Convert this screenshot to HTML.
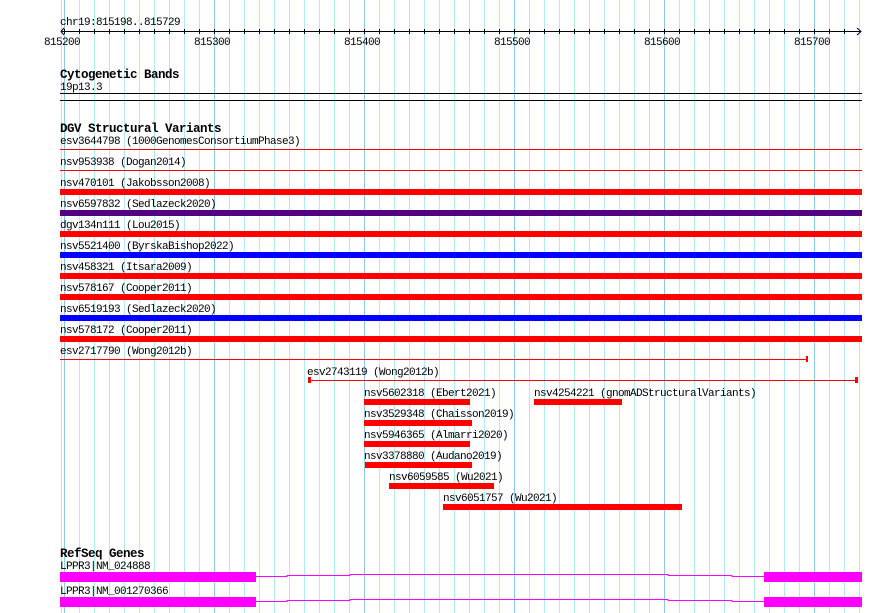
<!DOCTYPE html>
<html><head><meta charset="utf-8"><style>
html,body{margin:0;padding:0;background:#fff;width:890px;height:613px;overflow:hidden}
svg{display:block}
text{font-family:"Liberation Mono",monospace;font-size:11px;letter-spacing:-0.6px;fill:#000}
.h{font-weight:bold;font-size:12.5px;letter-spacing:-0.5px}
</style></head><body>
<svg width="890" height="613" xmlns="http://www.w3.org/2000/svg">
<defs>
<pattern id="gp" x="64" y="0" width="15" height="613" patternUnits="userSpaceOnUse"><rect x="0" y="0" width="1" height="613" fill="#b0eaf2"/></pattern>
<pattern id="tp" x="64" y="29" width="15" height="5" patternUnits="userSpaceOnUse"><rect x="0" y="0" width="1" height="5" fill="#000"/></pattern>
</defs>
<rect x="61" y="0" width="1" height="613" fill="#b0eaf2"/>
<rect x="64" y="0" width="798" height="613" fill="url(#gp)"/>
<rect x="64" y="0" width="1" height="613" fill="#8ccae6"/>
<rect x="214" y="0" width="1" height="613" fill="#8ccae6"/>
<rect x="364" y="0" width="1" height="613" fill="#8ccae6"/>
<rect x="514" y="0" width="1" height="613" fill="#8ccae6"/>
<rect x="664" y="0" width="1" height="613" fill="#8ccae6"/>
<rect x="814" y="0" width="1" height="613" fill="#8ccae6"/>
<!-- ruler -->
<text x="60" y="25">chr19:815198..815729</text>
<rect x="61" y="31" width="800" height="1" fill="#000"/>
<rect x="64" y="29" width="795" height="5" fill="url(#tp)"/>
<path d="M857 28 L861 31.5 L857 35" stroke="#000" fill="none"/>
<path d="M64 28 L61 31.5 L64 35" stroke="#000" fill="none"/>
<text x="44" y="45">815200</text>
<text x="194" y="45">815300</text>
<text x="344" y="45">815400</text>
<text x="494" y="45">815500</text>
<text x="644" y="45">815600</text>
<text x="794" y="45">815700</text>
<!-- cyto -->
<text class="h" x="60" y="78">Cytogenetic Bands</text>
<text x="60" y="90">19p13.3</text>
<rect x="60" y="93" width="802" height="1" fill="#000"/>
<rect x="60" y="100" width="802" height="1" fill="#000"/>
<!-- DGV -->
<text class="h" x="60" y="132">DGV Structural Variants</text>
<text x="60" y="144">esv3644798 (1000GenomesConsortiumPhase3)</text>
<rect x="60" y="149" width="802" height="1" fill="#f00"/>
<text x="60" y="165">nsv953938 (Dogan2014)</text>
<rect x="60" y="170" width="802" height="1" fill="#f00"/>
<text x="60" y="186">nsv470101 (Jakobsson2008)</text>
<rect x="60" y="189" width="802" height="6" fill="#f00"/>
<text x="60" y="207">nsv6597832 (Sedlazeck2020)</text>
<rect x="60" y="210" width="802" height="6" fill="#500080"/>
<text x="60" y="228">dgv134n111 (Lou2015)</text>
<rect x="60" y="231" width="802" height="6" fill="#f00"/>
<text x="60" y="249">nsv5521400 (ByrskaBishop2022)</text>
<rect x="60" y="252" width="802" height="6" fill="#00f"/>
<text x="60" y="270">nsv458321 (Itsara2009)</text>
<rect x="60" y="273" width="802" height="6" fill="#f00"/>
<text x="60" y="291">nsv578167 (Cooper2011)</text>
<rect x="60" y="294" width="802" height="6" fill="#f00"/>
<text x="60" y="312">nsv6519193 (Sedlazeck2020)</text>
<rect x="60" y="315" width="802" height="6" fill="#00f"/>
<text x="60" y="333">nsv578172 (Cooper2011)</text>
<rect x="60" y="336" width="802" height="6" fill="#f00"/>
<text x="60" y="354">esv2717790 (Wong2012b)</text>
<rect x="60" y="359" width="747" height="1" fill="#f00"/>
<rect x="806" y="356" width="2" height="6" fill="#f00"/>
<text x="307" y="375">esv2743119 (Wong2012b)</text>
<rect x="308" y="380" width="549" height="1" fill="#f00"/>
<rect x="308" y="377" width="3" height="6" fill="#f00"/>
<rect x="855" y="377" width="3" height="6" fill="#f00"/>
<text x="364" y="396">nsv5602318 (Ebert2021)</text>
<rect x="364" y="399" width="106" height="6" fill="#f00"/>
<text x="534" y="396">nsv4254221 (gnomADStructuralVariants)</text>
<rect x="534" y="399" width="88" height="6" fill="#f00"/>
<text x="364" y="417">nsv3529348 (Chaisson2019)</text>
<rect x="364" y="420" width="108" height="6" fill="#f00"/>
<text x="364" y="438">nsv5946365 (Almarri2020)</text>
<rect x="364" y="441" width="106" height="6" fill="#f00"/>
<text x="364" y="459">nsv3378880 (Audano2019)</text>
<rect x="365" y="462" width="107" height="6" fill="#f00"/>
<text x="389" y="480">nsv6059585 (Wu2021)</text>
<rect x="389" y="483" width="105" height="6" fill="#f00"/>
<text x="443" y="501">nsv6051757 (Wu2021)</text>
<rect x="443" y="504" width="239" height="6" fill="#f00"/>
<!-- RefSeq -->
<text class="h" x="60" y="557">RefSeq Genes</text>
<text x="60" y="569">LPPR3|NM_024888</text>
<rect x="60" y="572" width="196" height="10" fill="#f0f"/>
<path d="M256 576.5 H287 V575.5 H350 V574.5 H668 V575.5 H732 V576.5 H764" stroke="#f0f" fill="none"/>
<rect x="764" y="572" width="98" height="10" fill="#f0f"/>
<text x="60" y="594">LPPR3|NM_001270366</text>
<rect x="60" y="597" width="196" height="10" fill="#f0f"/>
<path d="M256 601.5 H287 V600.5 H350 V599.5 H668 V600.5 H732 V601.5 H764" stroke="#f0f" fill="none"/>
<rect x="764" y="597" width="98" height="10" fill="#f0f"/>
</svg>
</body></html>
